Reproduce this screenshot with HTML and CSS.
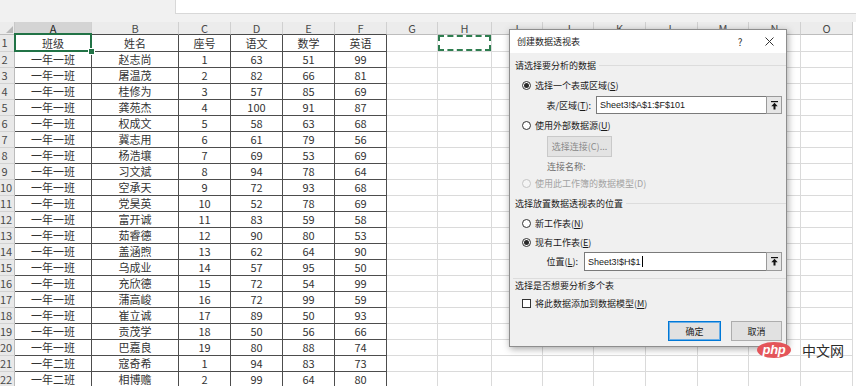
FILE: index.html
```html
<!DOCTYPE html>
<html lang="zh-CN">
<head>
<meta charset="utf-8">
<title>创建数据透视表</title>
<link rel="stylesheet" href="styles.css">
</head>
<body>
<div class="topbar"><div class="namebox"></div><div class="formula"></div></div>
<div class="band"></div>
<div class="sheet">
  <div class="row hdr">
    <div class="corner"><svg width="7" height="7" viewBox="0 0 7 7"><polygon points="7,0 7,7 0,7" fill="#b9b9b9"/></svg></div>
    <div class="ch sel">A</div><div class="ch dk">B</div><div class="ch dk">C</div><div class="ch dk">D</div><div class="ch dk">E</div><div class="ch dk">F</div><div class="ch">G</div><div class="ch">H</div><div class="ch">I</div><div class="ch">J</div><div class="ch">K</div><div class="ch">L</div><div class="ch">M</div><div class="ch">N</div><div class="ch">O</div>
  </div>
  <div class="row first"><div class="rh">1</div><div class="c d active">班级</div><div class="c d">姓名</div><div class="c d">座号</div><div class="c d">语文</div><div class="c d">数学</div><div class="c d">英语</div><div class="c"></div><div class="c"><span class="ants"></span></div><div class="c"></div><div class="c"></div><div class="c"></div><div class="c"></div><div class="c"></div><div class="c"></div><div class="c"></div></div>
  <div class="row"><div class="rh">2</div><div class="c d">一年一班</div><div class="c d">赵志尚</div><div class="c d">1</div><div class="c d">63</div><div class="c d">51</div><div class="c d">99</div><div class="c"></div><div class="c"></div><div class="c"></div><div class="c"></div><div class="c"></div><div class="c"></div><div class="c"></div><div class="c"></div><div class="c"></div></div>
  <div class="row"><div class="rh">3</div><div class="c d">一年一班</div><div class="c d">屠温茂</div><div class="c d">2</div><div class="c d">82</div><div class="c d">66</div><div class="c d">81</div><div class="c"></div><div class="c"></div><div class="c"></div><div class="c"></div><div class="c"></div><div class="c"></div><div class="c"></div><div class="c"></div><div class="c"></div></div>
  <div class="row"><div class="rh">4</div><div class="c d">一年一班</div><div class="c d">桂修为</div><div class="c d">3</div><div class="c d">57</div><div class="c d">85</div><div class="c d">69</div><div class="c"></div><div class="c"></div><div class="c"></div><div class="c"></div><div class="c"></div><div class="c"></div><div class="c"></div><div class="c"></div><div class="c"></div></div>
  <div class="row"><div class="rh">5</div><div class="c d">一年一班</div><div class="c d">龚苑杰</div><div class="c d">4</div><div class="c d">100</div><div class="c d">91</div><div class="c d">87</div><div class="c"></div><div class="c"></div><div class="c"></div><div class="c"></div><div class="c"></div><div class="c"></div><div class="c"></div><div class="c"></div><div class="c"></div></div>
  <div class="row"><div class="rh">6</div><div class="c d">一年一班</div><div class="c d">权成文</div><div class="c d">5</div><div class="c d">58</div><div class="c d">63</div><div class="c d">68</div><div class="c"></div><div class="c"></div><div class="c"></div><div class="c"></div><div class="c"></div><div class="c"></div><div class="c"></div><div class="c"></div><div class="c"></div></div>
  <div class="row"><div class="rh">7</div><div class="c d">一年一班</div><div class="c d">冀志用</div><div class="c d">6</div><div class="c d">61</div><div class="c d">79</div><div class="c d">56</div><div class="c"></div><div class="c"></div><div class="c"></div><div class="c"></div><div class="c"></div><div class="c"></div><div class="c"></div><div class="c"></div><div class="c"></div></div>
  <div class="row"><div class="rh">8</div><div class="c d">一年一班</div><div class="c d">杨浩壤</div><div class="c d">7</div><div class="c d">69</div><div class="c d">53</div><div class="c d">69</div><div class="c"></div><div class="c"></div><div class="c"></div><div class="c"></div><div class="c"></div><div class="c"></div><div class="c"></div><div class="c"></div><div class="c"></div></div>
  <div class="row"><div class="rh">9</div><div class="c d">一年一班</div><div class="c d">习文斌</div><div class="c d">8</div><div class="c d">94</div><div class="c d">78</div><div class="c d">64</div><div class="c"></div><div class="c"></div><div class="c"></div><div class="c"></div><div class="c"></div><div class="c"></div><div class="c"></div><div class="c"></div><div class="c"></div></div>
  <div class="row"><div class="rh">10</div><div class="c d">一年一班</div><div class="c d">空承天</div><div class="c d">9</div><div class="c d">72</div><div class="c d">93</div><div class="c d">68</div><div class="c"></div><div class="c"></div><div class="c"></div><div class="c"></div><div class="c"></div><div class="c"></div><div class="c"></div><div class="c"></div><div class="c"></div></div>
  <div class="row"><div class="rh">11</div><div class="c d">一年一班</div><div class="c d">党昊英</div><div class="c d">10</div><div class="c d">52</div><div class="c d">78</div><div class="c d">69</div><div class="c"></div><div class="c"></div><div class="c"></div><div class="c"></div><div class="c"></div><div class="c"></div><div class="c"></div><div class="c"></div><div class="c"></div></div>
  <div class="row"><div class="rh">12</div><div class="c d">一年一班</div><div class="c d">富开诚</div><div class="c d">11</div><div class="c d">83</div><div class="c d">59</div><div class="c d">58</div><div class="c"></div><div class="c"></div><div class="c"></div><div class="c"></div><div class="c"></div><div class="c"></div><div class="c"></div><div class="c"></div><div class="c"></div></div>
  <div class="row"><div class="rh">13</div><div class="c d">一年一班</div><div class="c d">茹睿德</div><div class="c d">12</div><div class="c d">90</div><div class="c d">80</div><div class="c d">53</div><div class="c"></div><div class="c"></div><div class="c"></div><div class="c"></div><div class="c"></div><div class="c"></div><div class="c"></div><div class="c"></div><div class="c"></div></div>
  <div class="row"><div class="rh">14</div><div class="c d">一年一班</div><div class="c d">盖涵煦</div><div class="c d">13</div><div class="c d">62</div><div class="c d">64</div><div class="c d">90</div><div class="c"></div><div class="c"></div><div class="c"></div><div class="c"></div><div class="c"></div><div class="c"></div><div class="c"></div><div class="c"></div><div class="c"></div></div>
  <div class="row"><div class="rh">15</div><div class="c d">一年一班</div><div class="c d">乌成业</div><div class="c d">14</div><div class="c d">57</div><div class="c d">95</div><div class="c d">50</div><div class="c"></div><div class="c"></div><div class="c"></div><div class="c"></div><div class="c"></div><div class="c"></div><div class="c"></div><div class="c"></div><div class="c"></div></div>
  <div class="row"><div class="rh">16</div><div class="c d">一年一班</div><div class="c d">充欣德</div><div class="c d">15</div><div class="c d">72</div><div class="c d">54</div><div class="c d">99</div><div class="c"></div><div class="c"></div><div class="c"></div><div class="c"></div><div class="c"></div><div class="c"></div><div class="c"></div><div class="c"></div><div class="c"></div></div>
  <div class="row"><div class="rh">17</div><div class="c d">一年一班</div><div class="c d">蒲高峻</div><div class="c d">16</div><div class="c d">72</div><div class="c d">99</div><div class="c d">59</div><div class="c"></div><div class="c"></div><div class="c"></div><div class="c"></div><div class="c"></div><div class="c"></div><div class="c"></div><div class="c"></div><div class="c"></div></div>
  <div class="row"><div class="rh">18</div><div class="c d">一年一班</div><div class="c d">崔立诚</div><div class="c d">17</div><div class="c d">89</div><div class="c d">50</div><div class="c d">93</div><div class="c"></div><div class="c"></div><div class="c"></div><div class="c"></div><div class="c"></div><div class="c"></div><div class="c"></div><div class="c"></div><div class="c"></div></div>
  <div class="row"><div class="rh">19</div><div class="c d">一年一班</div><div class="c d">贡茂学</div><div class="c d">18</div><div class="c d">50</div><div class="c d">56</div><div class="c d">66</div><div class="c"></div><div class="c"></div><div class="c"></div><div class="c"></div><div class="c"></div><div class="c"></div><div class="c"></div><div class="c"></div><div class="c"></div></div>
  <div class="row"><div class="rh">20</div><div class="c d">一年一班</div><div class="c d">巴嘉良</div><div class="c d">19</div><div class="c d">80</div><div class="c d">88</div><div class="c d">74</div><div class="c"></div><div class="c"></div><div class="c"></div><div class="c"></div><div class="c"></div><div class="c"></div><div class="c"></div><div class="c"></div><div class="c"></div></div>
  <div class="row"><div class="rh">21</div><div class="c d">一年二班</div><div class="c d">寇奇希</div><div class="c d">1</div><div class="c d">94</div><div class="c d">83</div><div class="c d">73</div><div class="c"></div><div class="c"></div><div class="c"></div><div class="c"></div><div class="c"></div><div class="c"></div><div class="c"></div><div class="c"></div><div class="c"></div></div>
  <div class="row"><div class="rh">22</div><div class="c d">一年二班</div><div class="c d">相博赡</div><div class="c d">2</div><div class="c d">99</div><div class="c d">64</div><div class="c d">80</div><div class="c"></div><div class="c"></div><div class="c"></div><div class="c"></div><div class="c"></div><div class="c"></div><div class="c"></div><div class="c"></div><div class="c"></div></div>
</div>

<div class="dialog">
  <div class="dlg-title">
    <span class="dlg-name">创建数据透视表</span>
    <span class="dlg-help">?</span>
    <span class="dlg-close"><svg width="9" height="9" viewBox="0 0 9 9"><path d="M0.5 0.5 L8.5 8.5 M8.5 0.5 L0.5 8.5" stroke="#333" stroke-width="1"/></svg></span>
  </div>
  <div class="dlg-body">
    <div class="group-head g1"><span>请选择要分析的数据</span></div>
    <div class="opt o1"><span class="radio on"></span><span>选择一个表或区域(<u>S</u>)</span></div>
    <div class="field f1">
      <span class="flabel l1">表/区域(<u>T</u>):</span>
      <span class="finput">Sheet3!$A$1:$F$101</span>
      <span class="fbtn"><svg width="7" height="9" viewBox="0 0 7 9"><rect x="0" y="0" width="7" height="1.2" fill="#111"/><polygon points="3.5,1.8 0.3,5.2 6.7,5.2" fill="#111"/><rect x="2.5" y="5" width="2" height="3.5" fill="#111"/></svg></span>
    </div>
    <div class="opt o2"><span class="radio"></span><span>使用外部数据源(<u>U</u>)</span></div>
    <div class="conn-btn">选择连接(C)...</div>
    <div class="conn-name">连接名称:</div>
    <div class="opt o3 disabled"><span class="radio off"></span><span>使用此工作簿的数据模型(D)</span></div>
    <div class="group-head g2"><span>选择放置数据透视表的位置</span></div>
    <div class="opt o4"><span class="radio"></span><span>新工作表(<u>N</u>)</span></div>
    <div class="opt o5"><span class="radio on"></span><span>现有工作表(<u>E</u>)</span></div>
    <div class="field f2">
      <span class="flabel l2">位置(<u>L</u>):</span>
      <span class="finput">Sheet3!$H$1<span class="caret"></span></span>
      <span class="fbtn"><svg width="7" height="9" viewBox="0 0 7 9"><rect x="0" y="0" width="7" height="1.2" fill="#111"/><polygon points="3.5,1.8 0.3,5.2 6.7,5.2" fill="#111"/><rect x="2.5" y="5" width="2" height="3.5" fill="#111"/></svg></span>
    </div>
    <div class="group-sep">选择是否想要分析多个表</div>
    <div class="opt o6"><span class="check"></span><span>将此数据添加到数据模型(<u>M</u>)</span></div>
    <div class="actions">
      <span class="btn primary">确定</span>
      <span class="btn">取消</span>
    </div>
  </div>
</div>

<div class="logo"><span class="php">php</span><span class="cn">中文网</span></div>
</body>
</html>
```

FILE: styles.css
```css
* { box-sizing: border-box; margin: 0; padding: 0; }

body {
  width: 856px;
  height: 386px;
  overflow: hidden;
  background: #fff;
  position: relative;
  font-family: "Noto Sans CJK SC", "Noto Sans", sans-serif;
  color: #222;
}

.topbar { height: 14px; display: flex; background: #f1f1f1; }
.namebox { width: 175px; }
.formula { flex: 1; background: #fff; border-left: 1px solid #d8d8d8; border-bottom: 1px solid #d8d8d8; }
.band { height: 8px; background: #f1f1f1; }

.sheet { display: flex; flex-direction: column; }
.row {
  display: grid;
  grid-template-columns: 15px 77px 87px 52px 52px 52px 52px 51px 54px 51px 51px 52px 52px 51px 52px 52px;
  height: 16px;
}
.row.hdr { height: 13px; }
.row.first { height: 17px; }

.corner {
  background: #ececec;
  border-right: 1px solid #c9c9c9;
  border-bottom: 1px solid #bdbdbd;
  display: flex;
  justify-content: flex-end;
  align-items: flex-end;
  padding: 0 1px 1px 0;
}
.ch {
  background: #ececec;
  border-right: 1px solid #d0d0d0;
  border-bottom: 1px solid #bdbdbd;
  color: #4a4a4a;
  font-size: 11px;
  line-height: 12px;
  text-align: center;
}
.ch.dk { border-bottom-color: #4a4a4a; }
.ch.sel { background: #d4d4d4; color: #1e1e1e; border-bottom: 1px solid #217346; }

.rh {
  background: #e9e9e9;
  border-right: 1px solid #bcbcbc;
  border-bottom: 1px solid #d2d2d2;
  color: #4a4a4a;
  font-size: 11px;
  line-height: 15px;
  text-align: center;
  padding-right: 5px;
  white-space: nowrap;
}

.c {
  border-right: 1px solid #dadada;
  border-bottom: 1px solid #dadada;
  font-size: 11px;
  color: #333;
  display: flex;
  align-items: center;
  justify-content: center;
  white-space: nowrap;
  line-height: 1;
}
.c.d { border-right-color: #4d4d4d; border-bottom-color: #4d4d4d; }

.active { position: relative; }
.active::after {
  content: "";
  position: absolute;
  left: -1px; top: -2px; right: -1px; bottom: -1px;
  border: 2px solid #217346;
}
.active::before {
  content: "";
  position: absolute;
  right: -4px; bottom: -4px;
  width: 5px; height: 5px;
  background: #217346;
  border: 1px solid #fff;
  z-index: 2;
}

.ants {
  width: 100%;
  height: 100%;
  border: 2px dashed #2e7d4f;
}

/* dialog */
.dialog {
  position: absolute;
  left: 509px;
  top: 29px;
  width: 278px;
  height: 318px;
  background: #f0f0f0;
  border: 1px solid #8e8e8e;
  box-shadow: 1px 2px 7px rgba(0, 0, 0, 0.35);
  font-size: 9px;
  color: #1a1a1a;
  display: flex;
  flex-direction: column;
}
.dlg-title {
  height: 23px;
  background: #fff;
  display: flex;
  align-items: center;
  padding-left: 7px;
}
.dlg-name { flex: 1; font-size: 9px; color: #222; }
.dlg-help { width: 10px; font-size: 10px; color: #333; margin-right: 20px; text-align: center; }
.dlg-close { width: 9px; height: 9px; margin-right: 12px; display: flex; }

.dlg-body { padding: 0 4px 0 5px; display: flex; flex-direction: column; }

.group-head {
  display: flex;
  align-items: center;
  height: 14px;
  margin-right: -4px;
}
.group-head::after {
  content: "";
  flex: 1;
  border-top: 1px solid #dcdcdc;
  margin-left: 3px;
}
.g1 { margin-top: 5px; }
.g2 { margin-top: 6px; }

.opt {
  display: flex;
  align-items: center;
  gap: 4px;
  height: 14px;
  padding-left: 7px;
}
.o1 { margin-top: 6px; }
.o2 { margin-top: 4px; }
.o3 { margin-top: 2px; }
.o4 { margin-top: 6px; }
.o5 { margin-top: 5px; }
.o6 { margin-top: 3px; }
.disabled { color: #a3a3a3; }

.radio {
  width: 9px;
  height: 9px;
  border: 1px solid #333;
  border-radius: 50%;
  background: #fff;
  display: flex;
  align-items: center;
  justify-content: center;
}
.radio.on::after {
  content: "";
  width: 5px;
  height: 5px;
  border-radius: 50%;
  background: #2a2a2a;
}
.radio.off { border-color: #c4c4c4; background: #f4f4f4; }

.check {
  width: 9px;
  height: 9px;
  border: 1px solid #333;
  background: #fff;
}

.field { display: flex; align-items: stretch; height: 18px; }
.f1 { margin-top: 4px; }
.f2 { margin-top: 3px; height: 19px; }
.flabel { display: flex; align-items: center; justify-content: flex-end; }
.l1 { width: 76px; margin-right: 5px; }
.l2 { width: 63px; margin-right: 6px; }
.finput {
  flex: 1;
  background: #fff;
  border: 1px solid #7a7a7a;
  border-right: none;
  display: flex;
  align-items: center;
  padding-left: 3px;
  font-family: "Liberation Sans", sans-serif;
  font-size: 9px;
  color: #1a1a1a;
}
.caret { width: 1px; height: 11px; background: #000; margin-left: 1px; }
.fbtn {
  width: 16px;
  background: #e6e6e6;
  border: 1px solid #9a9a9a;
  display: flex;
  align-items: center;
  justify-content: center;
}

.conn-btn {
  margin-top: 4px;
  margin-left: 32px;
  width: 65px;
  height: 21px;
  background: #e3e3e3;
  border: 1px solid #c9c9c9;
  color: #8a8a8a;
  display: flex;
  align-items: center;
  justify-content: center;
}
.conn-name {
  margin-top: 3px;
  padding-left: 32px;
  height: 14px;
  line-height: 14px;
  color: #707070;
}

.group-sep {
  margin: 7px -4px 0 -2px;
  padding-left: 2px;
  border-top: 1px solid #dcdcdc;
  height: 15px;
  line-height: 14px;
}

.actions {
  margin-top: 11px;
  display: flex;
  justify-content: flex-end;
  gap: 10px;
}
.btn {
  width: 51px;
  height: 20px;
  background: #e1e1e1;
  border: 1px solid #adadad;
  display: flex;
  align-items: center;
  justify-content: center;
  color: #1a1a1a;
}
.btn.primary { width: 53px; border-color: #0078d7; box-shadow: inset 0 0 0 1px #6aaee6; }

/* watermark */
.logo {
  position: absolute;
  left: 757px;
  top: 342px;
  display: flex;
  align-items: center;
  gap: 11px;
}
.php {
  width: 34px;
  height: 16px;
  border-radius: 50%;
  background: #e4555a;
  color: #fff;
  font-family: "Liberation Sans", sans-serif;
  font-style: italic;
  font-weight: bold;
  font-size: 13px;
  line-height: 15px;
  text-align: center;
  letter-spacing: -0.3px;
}
.cn {
  font-size: 14px;
  color: #2b2b2b;
  line-height: 16px;
}
```
